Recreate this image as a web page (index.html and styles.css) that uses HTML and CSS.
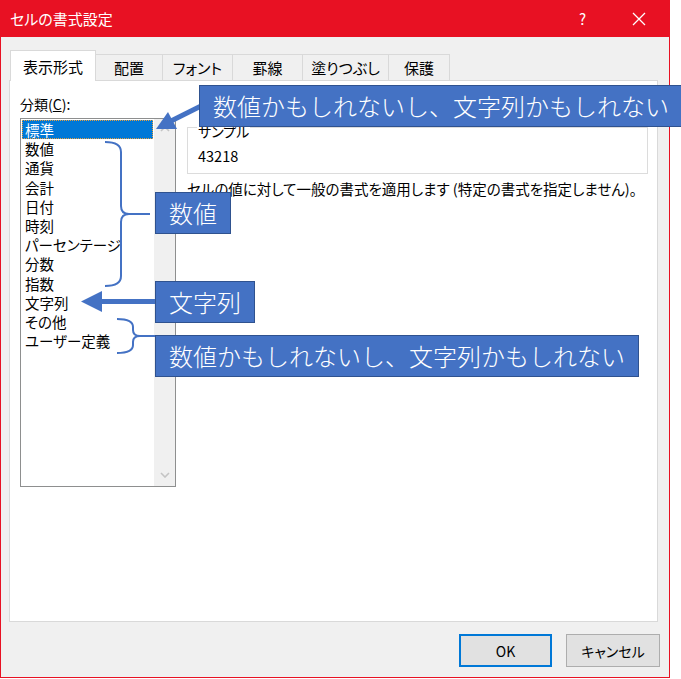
FILE: index.html
```html
<!DOCTYPE html>
<html lang="ja">
<head>
    <meta charset="UTF-8">
    <title>セルの書式設定</title>
    <link rel="stylesheet" href="styles.css">
</head>
<body>
    <div class="window">
        <div class="titlebar">
            <span class="title">セルの書式設定</span>
            <span class="help">?</span>
            <span class="close">
                <svg width="14" height="14" viewBox="0 0 14 14"><path d="M1 1L13 13M13 1L1 13" stroke="#fff" stroke-width="1.3"/></svg>
            </span>
        </div>

        <div class="content">
            <div class="tabs">
                <div class="tab active">表示形式</div>
                <div class="tab">配置</div>
                <div class="tab">フォント</div>
                <div class="tab">罫線</div>
                <div class="tab">塗りつぶし</div>
                <div class="tab">保護</div>
            </div>

            <div class="panel">
                <div class="category">
                    <div class="label">分類(<u>C</u>):</div>
                    <div class="listbox">
                        <ul class="items">
                            <li class="selected">標準</li>
                            <li>数値</li>
                            <li>通貨</li>
                            <li>会計</li>
                            <li>日付</li>
                            <li>時刻</li>
                            <li>パーセンテージ</li>
                            <li>分数</li>
                            <li>指数</li>
                            <li>文字列</li>
                            <li>その他</li>
                            <li>ユーザー定義</li>
                        </ul>
                        <div class="scrollbar">
                            <svg width="10" height="6" viewBox="0 0 10 6"><path d="M1 5L5 1L9 5" fill="none" stroke="#c4c4c4" stroke-width="1.6"/></svg>
                            <svg width="10" height="6" viewBox="0 0 10 6"><path d="M1 1L5 5L9 1" fill="none" stroke="#c4c4c4" stroke-width="1.6"/></svg>
                        </div>
                    </div>
                </div>

                <div class="detail">
                    <fieldset class="sample">
                        <legend>サンプル</legend>
                        <div class="sample-value">43218</div>
                    </fieldset>
                    <p class="desc">セルの値に対して一般の書式を適用します (特定の書式を指定しません)。</p>
                </div>
            </div>

            <div class="footer">
                <button class="btn default">OK</button>
                <button class="btn">キャンセル</button>
            </div>
        </div>
    </div>

    <!-- annotations drawn over the dialog -->
    <svg class="marks" width="681" height="679" viewBox="0 0 681 679">
        <g fill="none" stroke="#4472c4" stroke-width="2">
            <path d="M105 142Q121 142 121 152L121 206Q121 214 129 214L150 214M129 214Q121 214 121 222L121 276Q121 286 105 286"/>
            <path d="M117 319Q133 319 133 327L133 330Q133 336 140 336L156 336M140 336Q133 336 133 342L133 345Q133 353 117 353"/>
        </g>
        <g fill="#4472c4">
            <path d="M205 104L171 121" stroke="#4472c4" stroke-width="5"/>
            <polygon points="156,129 177,129 168,112"/>
            <rect x="100" y="299" width="57" height="5"/>
            <polygon points="81,301.5 102,291 102,312"/>
        </g>
    </svg>

    <div class="callout c1">数値かもしれないし、文字列かもしれない</div>
    <div class="callout c2">数値</div>
    <div class="callout c3">文字列</div>
    <div class="callout c4">数値かもしれないし、文字列かもしれない</div>
</body>
</html>
```

FILE: styles.css
```css
body {
    margin: 0;
    width: 681px;
    height: 679px;
    background: #fff;
    font-family: "Noto Sans CJK JP", "Noto Sans", sans-serif;
    font-size: 14px;
    color: #000;
    overflow: hidden;
}
.window {
    box-sizing: border-box;
    width: 670px;
    height: 678px;
    border: 1px solid #e81123;
    background: #f0f0f0;
}
.titlebar {
    display: flex;
    align-items: center;
    height: 37px;
    margin: -1px -1px 0;
    padding: 0 0 0 10px;
    background: #e81123;
    color: #fff;
}
.title {
    flex: 1;
    font-size: 15px;
    font-feature-settings: "palt";
}
.help {
    font-size: 15px;
    margin-right: 46px;
}
.close {
    display: flex;
    margin-right: 24px;
}
.content {
    padding: 12px 11px 0 8px;
}
.tabs {
    display: flex;
    align-items: flex-end;
    height: 31px;
    padding-left: 1px;
    font-feature-settings: "palt";
}
.tab {
    box-sizing: border-box;
    height: 26px;
    line-height: 26px;
    text-align: center;
    border: 1px solid #d9d9d9;
    border-bottom: none;
    border-left: none;
    background: #f0f0f0;
    font-size: 15px;
}
.tab.active {
    height: 31px;
    line-height: 32px;
    margin-bottom: -1px;
    border-left: 1px solid #d9d9d9;
    background: #fff;
    position: relative;
}
.tab:nth-child(1) { width: 86px; }
.tab:nth-child(2) { width: 67px; }
.tab:nth-child(3) { width: 70px; }
.tab:nth-child(4) { width: 70px; }
.tab:nth-child(5) { width: 86px; }
.tab:nth-child(6) { width: 61px; }
.panel {
    display: flex;
    gap: 11px;
    box-sizing: border-box;
    height: 542px;
    padding: 13px 9px 0 10px;
    border: 1px solid #d9d9d9;
    background: #fff;
}
.label {
    line-height: 20px;
    margin-bottom: 4px;
    font-size: 14px;
}
.listbox {
    display: flex;
    width: 156px;
    height: 369px;
    box-sizing: border-box;
    border: 1px solid #8e8f8f;
}
.items {
    flex: 1;
    list-style: none;
    margin: 0;
    padding: 1px;
    font-size: 14.5px;
    font-feature-settings: "palt";
}
.items li {
    height: 19.2px;
    line-height: 19.2px;
    padding-left: 3px;
}
.items li.selected {
    background: #0078d7;
    color: #fff;
    outline: 1px dotted #e8a040;
    outline-offset: -1px;
}
.scrollbar {
    width: 21px;
    display: flex;
    flex-direction: column;
    align-items: center;
    justify-content: space-between;
    padding: 7px 0 8px;
    background: #f0f0f0;
}
.detail {
    flex: 1;
    padding-top: 24px;
}
.sample {
    margin: 0;
    padding: 11px 10px 7px;
    height: 56px;
    box-sizing: border-box;
    border: 1px solid #dcdcdc;
}
.sample legend {
    position: relative;
    top: 4px;
    padding: 0 1px;
    margin-left: -1px;
    line-height: 18px;
    font-feature-settings: "palt";
}
.sample-value {
    line-height: 18px;
    font-size: 14.5px;
}
.desc {
    margin: 6px 0 0;
    line-height: 18px;
    font-size: 14.5px;
    font-feature-settings: "palt";
    white-space: nowrap;
}
.footer {
    display: flex;
    justify-content: flex-end;
    gap: 14px;
    margin: 12px -2px 0 0;
}
.btn {
    width: 94px;
    height: 33px;
    border: 1px solid #adadad;
    background: #e1e1e1;
    font-family: "Noto Sans CJK JP", sans-serif;
    font-size: 14px;
    font-feature-settings: "palt";
    color: #000;
}
.btn.default {
    width: 93px;
    border: 2px solid #0078d7;
}
.marks {
    position: absolute;
    left: 0;
    top: 0;
    pointer-events: none;
}
.callout {
    position: absolute;
    box-sizing: border-box;
    height: 42px;
    line-height: 39px;
    padding: 0 13px;
    background: #4472c4;
    border: 1.5px solid #2f528f;
    color: #fff;
    font-size: 24px;
    font-weight: 300;
    white-space: nowrap;
}
.c1 { left: 199px; top: 85px; }
.c2 { left: 155px; top: 192px; }
.c3 { left: 155px; top: 281px; }
.c4 { left: 155px; top: 335px; }
```
